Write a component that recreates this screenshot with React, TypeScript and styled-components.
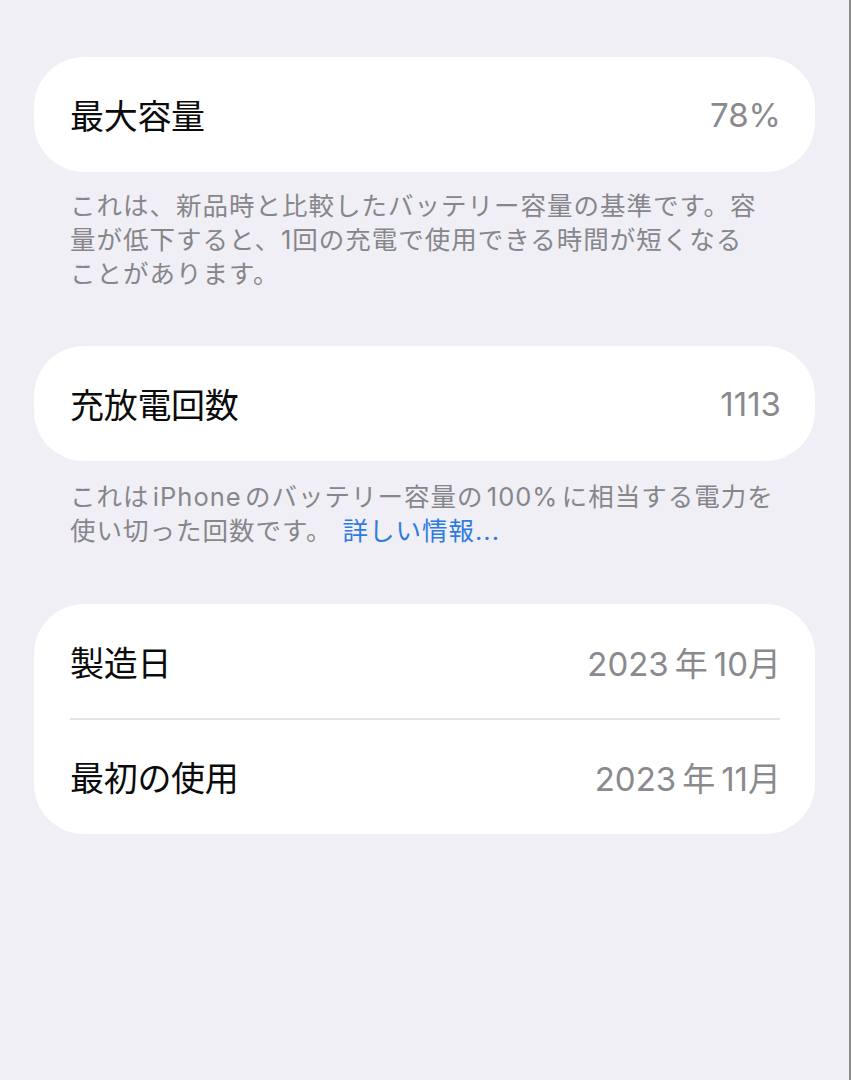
import React from "react";
import styled, { createGlobalStyle } from "styled-components";

const Global = createGlobalStyle`
  html, body {
    margin: 0;
    padding: 0;
    background: #f0eff5;
  }
  body {
    font-family: "Noto Sans CJK JP", "Noto Sans", sans-serif;
    -webkit-font-smoothing: antialiased;
  }
`;

const Page = styled.div`
  width: 851px;
  height: 1080px;
  box-sizing: border-box;
  background: #f0eff5;
  border-right: 2px solid #8c8c8c;
  padding: 57px 0 0 34px;
  display: flex;
  flex-direction: column;
`;

const Section = styled.section<{ $gap: number }>`
  display: flex;
  flex-direction: column;
  margin-bottom: ${(p) => p.$gap}px;
`;

const Card = styled.div`
  width: 781px;
  background: #ffffff;
  border-radius: 50px;
  display: flex;
  flex-direction: column;
  padding: 0 36px;
  box-sizing: border-box;
`;

const Row = styled.div`
  height: 115px;
  display: flex;
  align-items: center;
  justify-content: space-between;
`;

const Divider = styled.div`
  height: 2px;
  background: #e4e4e9;
  margin: -1px -1px -1px 0;
`;

const Label = styled.span`
  font-size: 34px;
  color: #0b0b0b;
  font-weight: 400;
  letter-spacing: -0.3px;
`;

const Value = styled.span`
  font-family: "Inter", "Noto Sans CJK JP", sans-serif;
  font-size: 33px;
  color: #8a8a8e;
  font-weight: 400;
  letter-spacing: 0px;
  margin-right: -2px;
`;

const Footer = styled.p<{ $top: number }>`
  margin: ${(p) => p.$top}px 0 0 36px;
  font-family: "Inter", "Noto Sans CJK JP", sans-serif;
  font-size: 25.5px;
  line-height: 34px;
  color: #86868b;
  letter-spacing: 1px;
`;

const Link = styled.a`
  color: #2f7ae0;
  text-decoration: none;
  margin-left: 10px;
`;

export default function App() {
  return (
    <>
      <Global />
      <Page>
        <Section $gap={55}>
          <Card>
            <Row>
              <Label>最大容量</Label>
              <Value>78%</Value>
            </Row>
          </Card>
          <Footer $top={17}>
            これは、新品時と比較したバッテリー容量の基準です。容
            <br />
            量が低下すると、1回の充電で使用できる時間が短くなる
            <br />
            ことがあります。
          </Footer>
        </Section>
        <Section $gap={56}>
          <Card>
            <Row>
              <Label>充放電回数</Label>
              <Value>1113</Value>
            </Row>
          </Card>
          <Footer $top={19}>
            これは{"\u200A"}iPhone{"\u200A"}のバッテリー容量の{"\u200A"}100%{"\u200A"}に相当する電力を
            <br />
            使い切った回数です。
            <Link href="#">詳しい情報...</Link>
          </Footer>
        </Section>
        <Section $gap={0}>
          <Card>
            <Row>
              <Label>製造日</Label>
              <Value>2023{"\u2009"}年{"\u2009"}10月</Value>
            </Row>
            <Divider />
            <Row>
              <Label>最初の使用</Label>
              <Value>2023{"\u2009"}年{"\u2009"}11月</Value>
            </Row>
          </Card>
        </Section>
      </Page>
    </>
  );
}
